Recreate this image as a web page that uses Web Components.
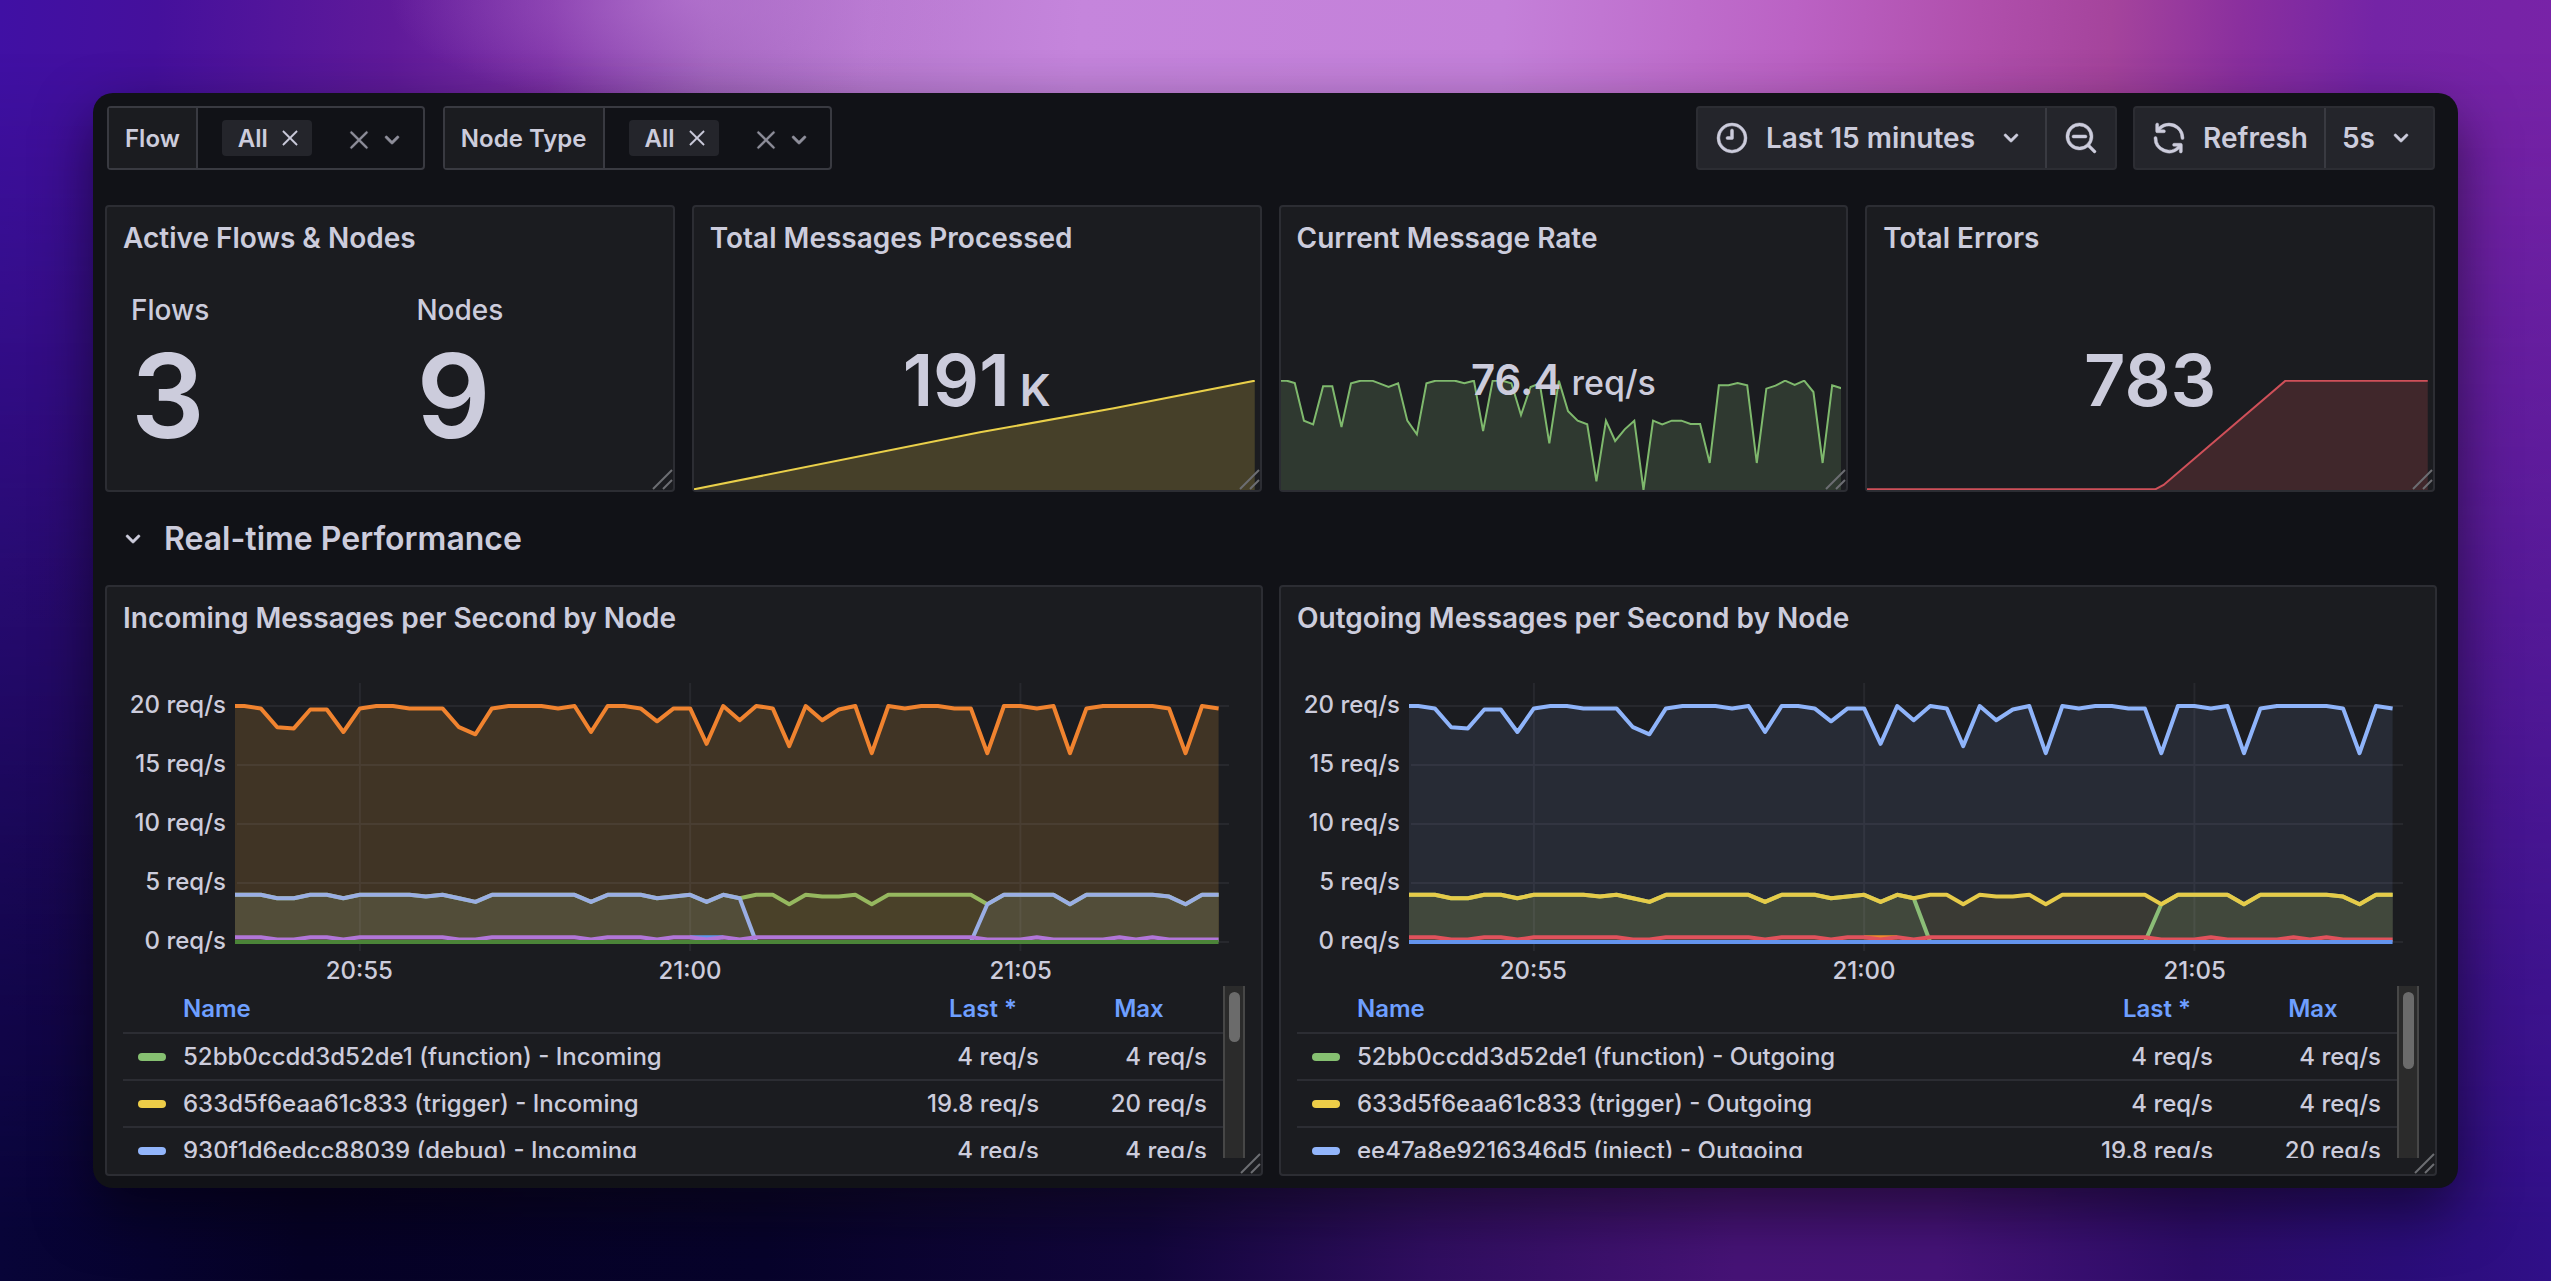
<!DOCTYPE html>
<html lang="en">
<head>
<meta charset="utf-8">
<title>Flow metrics</title>
<style>
  html, body { height: 100%; margin: 0; }
  body {
    font-family: Inter, "Open Sans", sans-serif;
    font-size: 24px;
    font-weight: 500;
    color: #ccccdc;
    --canvas: #111217;
    --panel: #1b1c20;
    --raised: #24252b;
    --line: #2c2d33;
    --line-strong: #393a41;
    --link: #6e9fff;
    --muted: #8e8e9a;
  }
</style>
</head>
<body>
<app-wallpaper>
  <app-window>
    <dash-toolbar></dash-toolbar>
    <panel-row columns="4">
      <dash-panel heading="Active Flows &amp; Nodes">
        <stat-pair></stat-pair>
      </dash-panel>
      <dash-panel heading="Total Messages Processed">
        <stat-spark value="191" unit="K" size="large" tone="yellow"></stat-spark>
      </dash-panel>
      <dash-panel heading="Current Message Rate">
        <stat-spark value="76.4" unit="req/s" size="small" tone="green"></stat-spark>
      </dash-panel>
      <dash-panel heading="Total Errors">
        <stat-spark value="783" size="large" tone="red"></stat-spark>
      </dash-panel>
    </panel-row>
    <section-heading>Real-time Performance</section-heading>
    <panel-row columns="2">
      <dash-panel heading="Incoming Messages per Second by Node">
        <time-chart kind="incoming"></time-chart>
        <series-legend kind="incoming"></series-legend>
      </dash-panel>
      <dash-panel heading="Outgoing Messages per Second by Node">
        <time-chart kind="outgoing"></time-chart>
        <series-legend kind="outgoing"></series-legend>
      </dash-panel>
    </panel-row>
  </app-window>
</app-wallpaper>

<script>
const ICONS = {
  clock: '<path d="M12 2a10 10 0 1 0 0 20 10 10 0 0 0 0-20Zm0 18.1a8.1 8.1 0 1 1 0-16.2 8.1 8.1 0 0 1 0 16.2Z"/><path d="M12 6a1 1 0 0 0-1 1v4H9a1 1 0 0 0 0 2h3a1 1 0 0 0 1-1V7a1 1 0 0 0-1-1Z"/>',
  zoomOut: '<path d="M21.71,20.29,18,16.61A9,9,0,1,0,16.61,18l3.68,3.68a1,1,0,0,0,1.42,0A1,1,0,0,0,21.71,20.29ZM11,18a7,7,0,1,1,7-7A7,7,0,0,1,11,18Zm4-8H7a1,1,0,0,0,0,2h8a1,1,0,0,0,0-2Z"/>',
  sync: '<path d="M19.91,15.51H15.38a1,1,0,0,0,0,2h2.4A8,8,0,0,1,4,12a1,1,0,0,0-2,0,10,10,0,0,0,16.88,7.23V21a1,1,0,0,0,2,0V16.5A1,1,0,0,0,19.91,15.51ZM12,2A10,10,0,0,0,5.12,4.77V3a1,1,0,0,0-2,0V7.5a1,1,0,0,0,1,1h4.5a1,1,0,0,0,0-2H6.22A8,8,0,0,1,20,12a1,1,0,0,0,2,0A10,10,0,0,0,12,2Z"/>',
  down: '<path d="M17,9.17a1,1,0,0,0-1.41,0L12,12.71,8.46,9.17a1,1,0,0,0-1.41,0,1,1,0,0,0,0,1.42l4.24,4.24a1,1,0,0,0,1.42,0L17,10.59A1,1,0,0,0,17,9.17Z"/>',
  times: '<path d="M13.41,12l6.3-6.29a1,1,0,1,0-1.42-1.42L12,10.59,5.71,4.29A1,1,0,0,0,4.29,5.71L10.59,12l-6.3,6.29a1,1,0,0,0,0,1.42,1,1,0,0,0,1.42,0L12,13.41l6.29,6.3a1,1,0,0,0,1.42,0,1,1,0,0,0,0-1.42Z"/>'
};
const icon = (name, size) =>
  `<svg width="${size}" height="${size}" viewBox="0 0 24 24" fill="currentColor" stroke="currentColor" stroke-width="0.3" aria-hidden="true">${ICONS[name]}</svg>`;

class Base extends HTMLElement {
  connectedCallback() {
    if (this.shadowRoot) return;
    this.attachShadow({ mode: 'open' }).innerHTML =
      `<style>*{box-sizing:border-box}svg{display:block;flex:none}button,select,input{font:inherit;color:inherit;background:none;border:0;margin:0;padding:0;outline:0}${this.css()}</style>${this.html()}`;
  }
  css() { return ''; }
  html() { return '<slot></slot>'; }
}

customElements.define('app-wallpaper', class extends Base {
  css() { return `
    :host { display: block; position: relative; box-sizing: border-box; min-height: 100%; padding: 93px;
      background:
        radial-gradient(ellipse 300px 110px at 27% 0, rgba(190,124,216,.55), transparent),
        linear-gradient(94deg, #4010a4 0%, #45109c 6%, #601a9a 15%, #7a2ea4 21%, #a063bc 27%, #b97ad1 33%, #c585dc 41%, #c480d9 57%, #bb62c4 68%, #b04fac 75%, #a5449c 80%, #8a2f9e 85%, #7424a6 90%, #7a22a8 100%); }
    .dusk { position: absolute; inset: 0;
      background: linear-gradient(90deg, #080438 0%, #060226 12%, #07032b 30%, #12063c 45%, #300e60 56%, #461376 68%, #451378 76%, #2d0c68 86%, #2a0d78 94%, #300f88 100%);
      -webkit-mask-image: linear-gradient(180deg, transparent 4%, rgba(0,0,0,.4) 40%, rgba(0,0,0,.7) 66%, #000 96%);
      mask-image: linear-gradient(180deg, transparent 4%, rgba(0,0,0,.4) 40%, rgba(0,0,0,.7) 66%, #000 96%); }
    .stage { position: relative; }`; }
  html() { return '<div class="dusk"></div><div class="stage"><slot></slot></div>'; }
});

customElements.define('app-window', class extends Base {
  css() { return `
    :host { display: flex; flex-direction: column; box-sizing: border-box; padding: 13px 21px 12px 12px;
      background: var(--canvas); border-radius: 20px; box-shadow: 0 24px 56px rgba(0,0,0,.5); }`; }
});

customElements.define('var-select', class extends Base {
  css() { return `
    :host { display: flex; box-sizing: border-box; height: 64px; border: 2px solid var(--line-strong); border-radius: 4px; font-weight: 600; }
    label { display: flex; align-items: center; padding: 0 16px; background: var(--panel); border-right: 2px solid var(--line-strong); }
    .box { display: flex; align-items: center; padding: 0 15px 0 24px; }
    .chip { display: flex; align-items: center; gap: 11px; height: 36px; padding: 0 11px 0 16px; background: var(--raised); border-radius: 4px; }
    input { width: 34px; height: 36px; }
    .tools { display: flex; align-items: center; gap: 4px; color: var(--muted); padding-top: 4px; }`; }
  html() {
    const name = this.getAttribute('name');
    return `<label for="q">${name}</label>
      <div class="box">
        <span class="chip">All<button aria-label="Remove All">${icon('times', 22)}</button></span>
        <input id="q" role="combobox" aria-expanded="false" autocomplete="off">
        <span class="tools"><button aria-label="Clear ${name}">${icon('times', 26)}</button><button aria-label="Open ${name}">${icon('down', 32)}</button></span>
      </div>`;
  }
});

customElements.define('dash-toolbar', class extends Base {
  css() { return `
    :host { display: flex; justify-content: space-between; padding: 0 2px; margin-bottom: 35px; }
    .side { display: flex; gap: 18px; }
    .right { gap: 16px; }
    .group { display: flex; height: 64px; background: var(--raised); border: 2px solid var(--line); border-radius: 4px; font-size: 28px; font-weight: 600; }
    .group > * { display: flex; align-items: center; }
    .group > * + * { border-left: 2px solid var(--line-strong); }
    .time { gap: 16px; padding: 0 18px 0 16px; }
    .time .caret { padding-left: 4px; }
    .zoom { padding: 0 16px; }
    .refresh { gap: 16px; padding: 0 16px; }
    .every { padding: 0 16px 0 16px; gap: 10px; }
    select { appearance: none; -webkit-appearance: none; field-sizing: content; }
    option { background: #24252b; }`; }
  html() { return `
    <div class="side"><var-select name="Flow"></var-select><var-select name="Node Type"></var-select></div>
    <div class="side right">
      <div class="group">
        <button class="time">${icon('clock', 36)}<span>Last 15 minutes</span><span class="caret">${icon('down', 32)}</span></button>
        <button class="zoom" aria-label="Zoom out">${icon('zoomOut', 36)}</button>
      </div>
      <div class="group">
        <button class="refresh">${icon('sync', 36)}<span>Refresh</span></button>
        <label class="every"><select aria-label="Refresh interval"><option>5s</option></select>${icon('down', 32)}</label>
      </div>
    </div>`; }
});

customElements.define('panel-row', class extends Base {
  css() { return `
    :host { display: grid; grid-template-columns: 1fr 1fr; gap: 16px; }
    :host([columns="4"]) { grid-template-columns: repeat(4, 1fr); gap: 17px; padding-right: 2px; grid-auto-rows: 287px; }`; }
});

customElements.define('dash-panel', class extends Base {
  css() { return `
    :host { display: flex; flex-direction: column; position: relative; min-width: 0; box-sizing: border-box;
      background: var(--panel); border: 2px solid var(--line); border-radius: 4px; }
    h2 { margin: 0; padding: 0 16px; font-size: 28px; line-height: 62px; font-weight: 600; white-space: nowrap; }
    .grip { position: absolute; right: 0; bottom: 0; }`; }
  html() { return `<h2>${this.getAttribute('heading').replace('&', '&amp;')}</h2><slot></slot>
    <svg class="grip" width="24" height="24" viewBox="0 0 24 24" fill="none" stroke="#6c6d72" stroke-width="2" aria-hidden="true"><path d="M4 23 23 4M14 23l9-9"/></svg>`; }
});

customElements.define('stat-pair', class extends Base {
  css() { return `
    :host { display: grid; grid-template-columns: 1fr 1fr; gap: 5px; padding-top: 24px; }
    dl { margin: 0; padding-left: 24px; display: flex; flex-direction: column; gap: 9px; }
    dt { font-size: 28px; line-height: 34px; }
    dd { margin: 0; font-size: 116px; line-height: 120px; font-weight: 600; }`; }
  html() { return `<dl><dt>Flows</dt><dd>3</dd></dl><dl><dt>Nodes</dt><dd>9</dd></dl>`; }
});

/* Sparkline shapes: view box, then the points of the line. */
const SPARKS = {
  yellow: { line: '#ead04a', fill: '#464029', box: [33, 570, 1465, 330],
    pts: '33,898 780,727 1130,655 1498,572' },
  green: { line: '#7fb96d', fill: '#2f3930', box: [28, 570, 1465, 330],
    pts: '28,572 43,572 64,579 88,692 112,703 138,589 162,589 186,711 211,580 236,572 266,572 285,580 309,591 334,580 358,692 383,733 408,580 432,572 482,572 507,580 532,572 556,723 581,572 606,572 630,580 655,675 680,591 704,580 729,760 754,572 778,664 803,692 828,703 852,874 877,692 901,753 926,718 951,692 975,900 1000,692 1024,703 1049,692 1074,692 1098,702 1123,702 1148,819 1172,586 1197,586 1221,579 1246,586 1271,819 1296,596 1320,587 1345,572 1370,585 1395,572 1419,606 1443,819 1468,586 1493,595' },
  red: { line: '#cf5059', fill: '#40272b', box: [395, 900, 1072, 330],
    pts: '395,1228 946,1228 962,1215 1195,902 1467,902' }
};

customElements.define('stat-spark', class extends Base {
  css() { return `
    :host { display: grid; flex: 1; min-height: 0; }
    .spark { grid-area: 1 / 1; align-self: end; width: calc(100% - 5px); height: 110px; }
    .value { grid-area: 1 / 1; z-index: 1; place-self: center; display: flex; align-items: baseline; font-weight: 600; line-height: 1; }
    .large { font-size: 72px; gap: 10px; }
    .large .unit { font-size: 44px; }
    .small { font-size: 42px; gap: 10px; }
    .small .unit { font-size: 34px; font-weight: 500; }`; }
  html() {
    const s = SPARKS[this.getAttribute('tone')];
    const [x, y, w, h] = s.box;
    const unit = this.getAttribute('unit');
    return `<svg class="spark" viewBox="${s.box.join(' ')}" preserveAspectRatio="none" aria-hidden="true">
        <polygon points="${x},${y + h} ${s.pts} ${x + w},${y + h}" fill="${s.fill}"/>
        <polyline points="${s.pts}" fill="none" stroke="${s.line}" stroke-width="2" vector-effect="non-scaling-stroke"/>
      </svg>
      <div class="value ${this.getAttribute('size')}"><span>${this.getAttribute('value')}</span>${unit ? `<span class="unit">${unit}</span>` : ''}</div>`;
  }
});

customElements.define('section-heading', class extends Base {
  css() { return `
    :host { display: block; }
    h2 { margin: 0; font: inherit; }
    button { display: flex; align-items: center; gap: 15px; height: 93px; padding-left: 12px; font-size: 32px; font-weight: 600; }`; }
  html() { return `<h2><button aria-expanded="true">${icon('down', 32)}<span><slot></slot></span></button></h2>`; }
});

/* One sample each 15 s; index 0 is 20:55, the first sample is index -7. */
const HIGH = [20,19.8,18.2,18.1,19.7,19.7,17.8,19.8,20,20,19.8,19.8,19.8,18.2,17.6,19.8,20,20,20,19.8,20,17.8,20,20,19.8,18.7,19.8,19.8,16.8,20,18.8,20,19.8,16.6,20,18.8,19.7,20,16,20,19.8,20,20,19.8,19.8,16,20,20,19.8,20,16,19.8,20,20,20,20,19.8,16,20,19.8];
const FOUR = [4,4,3.7,3.7,4,4,3.7,4,4,4,4,3.85,4,3.7,3.4,4,4,4,4,4,4,3.4,4,4,4,3.7,3.85,4,3.4,4,3.7,4,4,3.2,4,3.85,3.85,4,3.2,4,4,4,4,4,4,3.2,4,4,4,4,3.2,4,4,4,4,4,3.85,3.2,4,4];
const LOW = FOUR.map((v, i) => {
  const k = i - 7;
  if (k > 37) return [41, 46, 48].includes(k) ? .4 : .2;
  if (k > 23) return .4;
  return v < 3.8 ? .2 : .4;
});
const GAPPED = FOUR.map((v, i) => (i - 7 > 23 && i - 7 < 38 ? 0 : v));
const STEP = 16.53, ZERO_X = 125, BASE = 259, UNIT = 11.8, END = ZERO_X + 52 * STEP;
const place = (k, v) => `${(ZERO_X + k * STEP).toFixed(1)},${(BASE - v * UNIT).toFixed(1)}`;
const path = data => `0,${(BASE - data[0] * UNIT).toFixed(1)} ` + data.map((v, i) => place(i - 7, v)).join(' ');
const flat = v => `0,${BASE - v * UNIT} ${END},${BASE - v * UNIT}`;
const area = (data, fill) => `<polygon points="0,${BASE} ${path(data)} ${END},${BASE}" fill="${fill}"/>`;
const line = (points, stroke) => `<polyline points="${points}" fill="none" stroke="${stroke}" stroke-width="4" stroke-linejoin="round" vector-effect="non-scaling-stroke"/>`;
const patch = `${place(20, .4)} ${place(22, .4)}`;

const CHARTS = {
  incoming: {
    fills: area(HIGH, '#403425') + area(FOUR, '#4a4129') + area(GAPPED, '#524d39'),
    lines: line(path(HIGH), '#f0832f') + line(path(FOUR), '#96b85f') + line(path(GAPPED), '#9aaee4') +
      line(patch, '#5f97ee') + line(path(LOW), '#b176d8') + line(flat(0), '#4b8438')
  },
  outgoing: {
    fills: area(HIGH, '#272b35') + area(FOUR, '#3a3a34') + area(GAPPED, '#41483c'),
    lines: line(path(HIGH), '#8fb4fa') + line(path(GAPPED), '#8bbd77') + line(path(FOUR), '#e6cb49') +
      line(patch, '#f08a2c') + line(path(LOW), '#e0525c') + line(flat(0), '#6394ee')
  }
};

customElements.define('time-chart', class extends Base {
  css() { return `
    :host { display: grid; grid-template-columns: 128px 1fr; padding: 26px 32px 0 0; }
    .y { display: flex; flex-direction: column; padding-right: 9px; line-height: 59px; text-align: right; }
    .plot { padding-top: 8px; min-width: 0; }
    .plot svg { width: 100%; height: 268px; }
    .x { display: grid; grid-template-columns: 331fr 331fr 331fr 43fr; margin: 4px 0 0 -41px; line-height: 31px; text-align: center; }`; }
  html() {
    const c = CHARTS[this.getAttribute('kind')];
    const rows = [0, 5, 10, 15, 20].map(v => `M2 ${BASE - v * UNIT}H995`).join('');
    const cols = [0, 20, 40].map(k => `M${ZERO_X + k * STEP} 0V268`).join('');
    return `<div class="y"><span>20 req/s</span><span>15 req/s</span><span>10 req/s</span><span>5 req/s</span><span>0 req/s</span></div>
      <div class="plot">
        <svg viewBox="0 0 995 268" preserveAspectRatio="none" role="img" aria-label="Messages per second">
          ${c.fills}
          <path d="${rows}${cols}" fill="none" stroke="rgba(204,204,220,.07)" stroke-width="2" vector-effect="non-scaling-stroke"/>
          ${c.lines}
        </svg>
        <div class="x"><span>20:55</span><span>21:00</span><span>21:05</span></div>
      </div>`;
  }
});

const LEGENDS = {
  incoming: { thumb: 50, rows: [
    ['#86c071', '52bb0ccdd3d52de1 (function) - Incoming', '4 req/s', '4 req/s'],
    ['#edcd48', '633d5f6eaa61c833 (trigger) - Incoming', '19.8 req/s', '20 req/s'],
    ['#92b5fb', '930f1d6edcc88039 (debug) - Incoming', '4 req/s', '4 req/s']] },
  outgoing: { thumb: 77, rows: [
    ['#86c071', '52bb0ccdd3d52de1 (function) - Outgoing', '4 req/s', '4 req/s'],
    ['#edcd48', '633d5f6eaa61c833 (trigger) - Outgoing', '4 req/s', '4 req/s'],
    ['#92b5fb', 'ee47a8e9216346d5 (inject) - Outgoing', '19.8 req/s', '20 req/s']] }
};

customElements.define('series-legend', class extends Base {
  css() { return `
    :host { display: flex; height: 172px; overflow: hidden; margin: 0 16px 16px; }
    table { flex: 1; border-collapse: separate; border-spacing: 0; table-layout: fixed; width: 100%; align-self: flex-start; }
    th, td { padding: 0 16px; height: 48px; border-bottom: 2px solid var(--line); line-height: 30px; white-space: nowrap; text-align: right; }
    td { height: 47px; }
    th { font-weight: 600; color: var(--link); text-align: center; }
    th:first-child, td:first-child { text-align: left; padding-left: 60px; }
    td:first-child { padding-left: 15px; }
    .name { display: flex; align-items: center; gap: 17px; }
    .name i { width: 28px; height: 8px; border-radius: 4px; }
    .last { width: 144px; }
    .max { width: 168px; }
    .track { width: 22px; padding: 6px 3px 0 4px; background: #2b2b2b; border: solid #474747; border-width: 0 2px; }
    .thumb { border-radius: 6px; background: #6b6b6b; }`; }
  html() {
    const l = LEGENDS[this.getAttribute('kind')];
    return `<table><thead><tr><th>Name</th><th class="last">Last *</th><th class="max">Max</th></tr></thead><tbody>
      ${l.rows.map(([c, n, a, b]) => `<tr><td><span class="name"><i style="background:${c}"></i>${n}</span></td><td>${a}</td><td>${b}</td></tr>`).join('')}
      </tbody></table>
      <div class="track"><div class="thumb" style="height:${l.thumb}px"></div></div>`;
  }
});
</script>
</body>
</html>
